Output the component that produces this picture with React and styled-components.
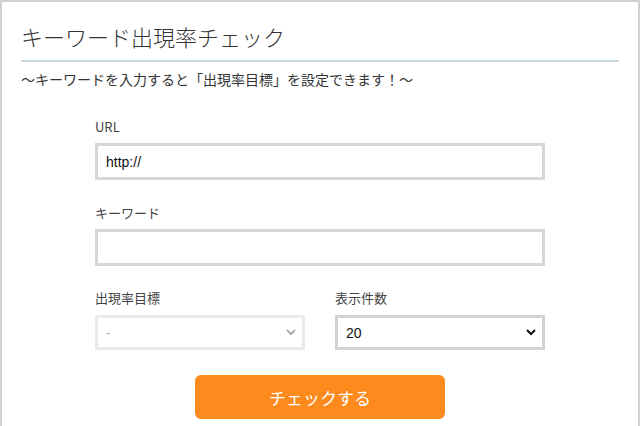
import React from 'react';
import styled, { createGlobalStyle } from 'styled-components';

const GlobalStyle = createGlobalStyle`
  html, body {
    margin: 0;
    padding: 0;
    background: #fff;
  }
  body {
    font-family: "Noto Sans CJK JP", "Noto Sans", sans-serif;
    color: #333;
  }
`;

const Panel = styled.div`
  box-sizing: border-box;
  width: 640px;
  height: 426px;
  border: 2px solid #d0d0d0;
  border-bottom: none;
  padding: 18px 19px 0 19px;
`;

const Title = styled.h1`
  margin: 0;
  font-size: 22px;
  font-weight: 300;
  line-height: 32px;
  color: #333;
  padding-bottom: 8px;
  border-bottom: 2px solid #c9d8de;
`;

const Lead = styled.p`
  margin: 7px 0 0;
  font-size: 14px;
  line-height: 20px;
  color: #333;
`;

const Form = styled.form`
  width: 450px;
  margin: 0 auto;
`;

const Field = styled.div`
  margin-top: ${p => p.$top}px;
`;

const Label = styled.label`
  display: block;
  font-size: 13px;
  line-height: 18px;
  color: #444;
  margin-bottom: ${p => p.$gap || 7}px;
`;

const TextInput = styled.input`
  box-sizing: border-box;
  display: block;
  width: 100%;
  height: 37px;
  border: 3px solid #d9d5d5;
  border-radius: 0;
  padding: 0 8px;
  font-family: "Liberation Sans", Arial, sans-serif;
  font-size: 14px;
  color: #111;
  outline: none;
  background: #fff;
`;

const Row = styled.div`
  display: grid;
  grid-template-columns: 1fr 1fr;
  gap: 30px;
  margin-top: 23px;
`;

const SelectWrap = styled.div`
  position: relative;
  height: 35px;
`;

const Select = styled.select`
  box-sizing: border-box;
  appearance: none;
  -webkit-appearance: none;
  width: 100%;
  height: 35px;
  border: 3px solid ${p => (p.disabled ? '#e3e0e0' : '#d6d2d2')};
  border-radius: 0;
  background: #fff;
  padding: 0 8px;
  font-family: "Liberation Sans", Arial, sans-serif;
  font-size: 14px;
  color: ${p => (p.disabled ? '#999' : '#111')};
  outline: none;
`;

const Chevron = styled.svg`
  position: absolute;
  right: 9px;
  top: 13px;
  width: 10px;
  height: 8px;
  pointer-events: none;
`;

const ButtonRow = styled.div`
  display: flex;
  justify-content: center;
  margin-top: 25px;
`;

const Button = styled.button`
  width: 250px;
  height: 44px;
  border: none;
  border-radius: 6px;
  background: #fd8a1c;
  color: #fff;
  font-family: "Noto Sans CJK JP", "Noto Sans", sans-serif;
  font-size: 17px;
  cursor: pointer;
`;

function Arrow({ muted }) {
  return (
    <Chevron viewBox="0 0 10 8">
      <path
        d="M1 2 L5 6 L9 2"
        fill="none"
        stroke={muted ? '#9a9a9a' : '#111'}
        strokeWidth={muted ? 1.6 : 2}
      />
    </Chevron>
  );
}

export default function App() {
  return (
    <>
      <GlobalStyle />
      <Panel>
        <Title>キーワード出現率チェック</Title>
        <Lead>～キーワードを入力すると「出現率目標」を設定できます！～</Lead>
        <Form onSubmit={e => e.preventDefault()}>
          <Field $top={29}>
            <Label>URL</Label>
            <TextInput defaultValue="http://" />
          </Field>
          <Field $top={24}>
            <Label>キーワード</Label>
            <TextInput />
          </Field>
          <Row>
            <div>
              <Label $gap={8}>出現率目標</Label>
              <SelectWrap>
                <Select disabled>
                  <option>-</option>
                </Select>
                <Arrow muted />
              </SelectWrap>
            </div>
            <div>
              <Label $gap={8}>表示件数</Label>
              <SelectWrap>
                <Select defaultValue="20">
                  <option>10</option>
                  <option>20</option>
                  <option>50</option>
                </Select>
                <Arrow />
              </SelectWrap>
            </div>
          </Row>
          <ButtonRow>
            <Button type="submit">チェックする</Button>
          </ButtonRow>
        </Form>
      </Panel>
    </>
  );
}
